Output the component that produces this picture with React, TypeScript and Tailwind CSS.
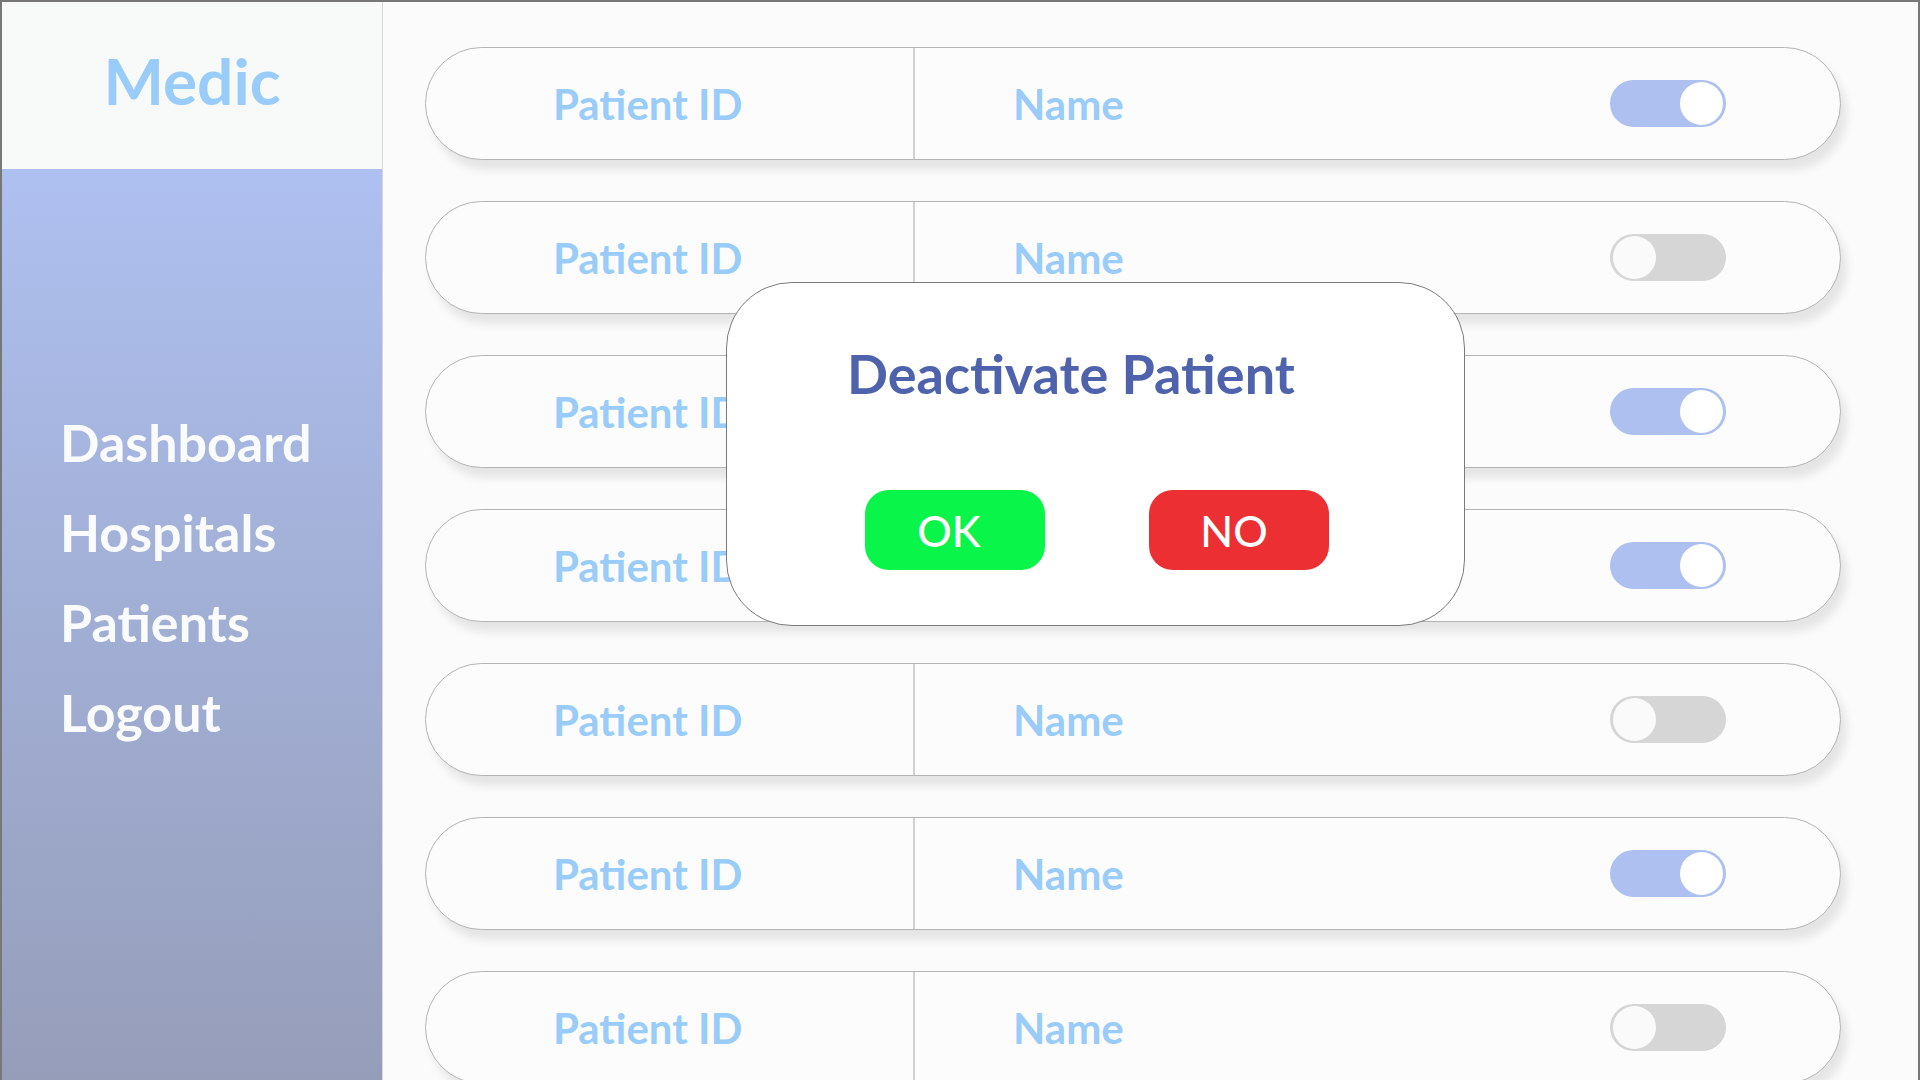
const patients = [
  { id: 1, active: true },
  { id: 2, active: false },
  { id: 3, active: true },
  { id: 4, active: true },
  { id: 5, active: false },
  { id: 6, active: true },
  { id: 7, active: false },
];

const Toggle = ({ on }: { on: boolean }) => (
  <div
    className={`flex h-[47px] w-[116px] items-center rounded-full px-[3px] ${
      on ? 'justify-end bg-[#aec0f0]' : 'justify-start bg-[#d6d6d6]'
    }`}
  >
    <div className={`h-[43px] w-[43px] rounded-full ${on ? 'bg-white' : 'bg-[#fafafa]'}`} />
  </div>
);

const PatientRow = ({ active }: { active: boolean }) => (
  <div className="flex h-[113px] w-[1416px] shrink-0 items-stretch rounded-full border border-[#b4b4b4] bg-[#fcfcfc] shadow-[6px_10px_10px_rgba(0,0,0,0.09)]">
    <div className="flex w-[487px] items-center pl-[127px]">
      <span className="text-[42px] font-bold leading-none text-[#99ccf9]">Patient ID</span>
    </div>
    <div className="w-[2px] bg-[#d2d2d2]" />
    <div className="flex flex-1 items-center pl-[98px] pr-[114px]">
      <span className="text-[42px] font-bold leading-none text-[#99ccf9]">Name</span>
      <div className="ml-auto">
        <Toggle on={active} />
      </div>
    </div>
  </div>
);

export default function App() {
  return (
    <div
      className="relative flex h-[1080px] w-[1920px] overflow-hidden border-l-2 border-r-2 border-t-2 border-[#777777] bg-[#fbfbfb]"
      style={{ fontFamily: 'Lato, "Open Sans", sans-serif' }}
    >
      {/* Sidebar */}
      <aside className="flex w-[381px] shrink-0 flex-col border-r border-[#d8d8d8]">
        <div className="h-[167px] bg-[#f8fafa] pt-[47px] text-center">
          <span className="text-[64px] font-bold leading-none text-[#99ccf9]">Medic</span>
        </div>
        <nav className="flex flex-1 flex-col gap-[38px] bg-gradient-to-b from-[#aec0f0] to-[#959db9] pl-[58px] pt-[247px]">
          <a className="text-[52px] font-bold leading-none text-[#fafbfc]">Dashboard</a>
          <a className="text-[52px] font-bold leading-none text-[#fafbfc]">Hospitals</a>
          <a className="text-[52px] font-bold leading-none text-[#fafbfc]">Patients</a>
          <a className="text-[52px] font-bold leading-none text-[#fafbfc]">Logout</a>
        </nav>
      </aside>

      {/* Patient list */}
      <main className="flex flex-1 flex-col gap-[41px] pl-[42px] pt-[45px]">
        {patients.map((p) => (
          <PatientRow key={p.id} active={p.active} />
        ))}
      </main>

      {/* Confirm dialog */}
      <div className="absolute left-[724px] top-[280px] h-[344px] w-[739px] rounded-[66px] border border-[#7a7a7a] bg-white">
        <div className="pl-[120px] pt-[64px]">
          <span className="text-[54px] font-bold leading-none text-[#4f63ad]">Deactivate Patient</span>
        </div>
        <div className="mt-[89px] flex gap-[104px] pl-[138px]">
          <button className="flex h-[80px] w-[180px] items-center justify-center rounded-[24px] bg-[#0af54a] pr-[12px]">
            <span className="text-[43px] font-medium leading-none text-white">OK</span>
          </button>
          <button className="flex h-[80px] w-[180px] items-center justify-center rounded-[24px] bg-[#ec2f32] pr-[10px]">
            <span className="text-[43px] font-medium leading-none text-white">NO</span>
          </button>
        </div>
      </div>
    </div>
  );
}
